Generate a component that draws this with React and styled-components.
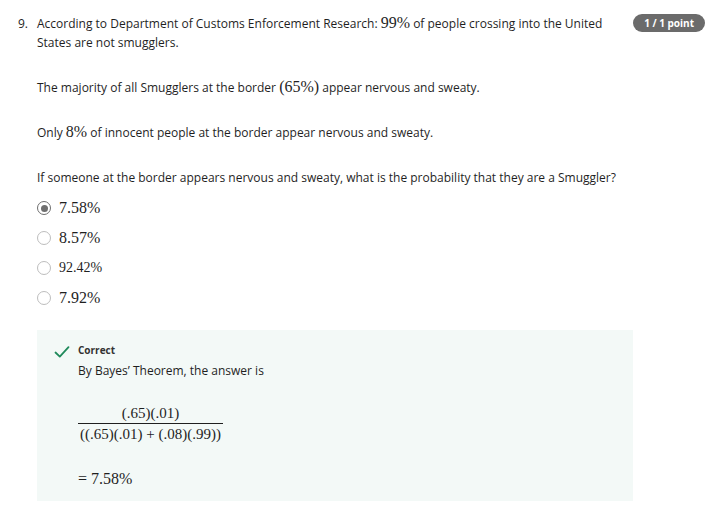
import React from 'react';
import styled, { createGlobalStyle } from 'styled-components';

const GlobalStyle = createGlobalStyle`
  html, body {
    margin: 0;
    padding: 0;
    background: #ffffff;
  }
  body {
    font-family: "Open Sans", "Noto Sans", sans-serif;
    font-size: 12px;
    color: #1f1f1f;
  }
`;

const options = [
  { id: 'a', text: '7.58%', selected: true },
  { id: 'b', text: '8.57%' },
  { id: 'c', text: '92.42%', small: true },
  { id: 'd', text: '7.92%' },
];

const App = () => (
  <>
    <GlobalStyle />
    <Page>
      <Question>
        <Number>9.</Number>
        <Body>
          <Prompt>
            <p>
              According to Department of Customs Enforcement Research: <M>99%</M> of people crossing into the United
              States are not smugglers.
            </p>
            <p>
              The majority of all Smugglers at the border <M>(65%)</M> appear nervous and sweaty.
            </p>
            <p>
              Only <M>8%</M> of innocent people at the border appear nervous and sweaty.
            </p>
            <p>
              If someone at the border appears nervous and sweaty, what is the probability that they are a Smuggler?
            </p>
          </Prompt>

          <Options>
            {options.map((opt) => (
              <Option key={opt.id}>
                <Radio selected={opt.selected} />
                <OptionText small={opt.small}>{opt.text}</OptionText>
              </Option>
            ))}
          </Options>

          <Feedback>
            <CheckIcon width="16" height="16" viewBox="0 0 16 16">
              <path d="M1.5 8.5 L5.8 12.6 L14.5 3.2" fill="none" stroke="#1f8a5b" strokeWidth="1.8" strokeLinecap="round" strokeLinejoin="round" />
            </CheckIcon>
            <FeedbackBody>
              <FeedbackTitle>Correct</FeedbackTitle>
              <FeedbackText>By Bayes’ Theorem, the answer is</FeedbackText>
              <Fraction>
                <Numer>(.65)(.01)</Numer>
                <Denom>((.65)(.01) + (.08)(.99))</Denom>
              </Fraction>
              <Result>= 7.58%</Result>
            </FeedbackBody>
          </Feedback>
        </Body>
        <Badge>1 / 1 point</Badge>
      </Question>
    </Page>
  </>
);

export default App;

const Page = styled.div`
  padding: 14px 8px 8px 18px;
`;

const Question = styled.div`
  display: grid;
  grid-template-columns: 19px 596px 1fr;
  align-items: start;
`;

const Number = styled.div`
  line-height: 19px;
`;

const Body = styled.div`
  display: flex;
  flex-direction: column;
`;

const Prompt = styled.div`
  p {
    margin: 0 0 26px 0;
    line-height: 19px;
  }
  p:last-child {
    margin-bottom: 0;
  }
`;

const M = styled.span`
  font-family: "Liberation Serif", "DejaVu Serif", serif;
  font-size: 16px;
  line-height: 1;
`;

const Options = styled.div`
  display: flex;
  flex-direction: column;
  gap: 10px;
  margin-top: 11px;
`;

const Option = styled.label`
  display: flex;
  align-items: center;
  gap: 8px;
  height: 20px;
`;

const Radio = styled.span`
  box-sizing: border-box;
  width: 14px;
  height: 14px;
  border-radius: 50%;
  border: 1.5px solid ${(p) => (p.selected ? '#6e6e6e' : '#bdbdbd')};
  position: relative;
  flex-shrink: 0;

  &::after {
    content: '';
    display: ${(p) => (p.selected ? 'block' : 'none')};
    position: absolute;
    inset: 2.5px;
    border-radius: 50%;
    background: #6e6e6e;
  }
`;

const OptionText = styled.span`
  font-family: "Liberation Serif", "DejaVu Serif", serif;
  font-size: ${(p) => (p.small ? '14px' : '16px')};
  color: #1f1f1f;
`;

const Feedback = styled.div`
  display: flex;
  gap: 8px;
  background: #f3f9f7;
  margin-top: 22px;
  padding: 13px 16px 12px 17px;
`;

const CheckIcon = styled.svg`
  flex-shrink: 0;
  margin-top: 1px;
`;

const FeedbackBody = styled.div`
  display: flex;
  flex-direction: column;
`;

const FeedbackTitle = styled.div`
  font-size: 10px;
  font-weight: 700;
  color: #333;
  line-height: 14px;
`;

const FeedbackText = styled.div`
  margin-top: 4px;
  line-height: 19px;
`;

const Fraction = styled.div`
  display: inline-flex;
  flex-direction: column;
  align-items: center;
  align-self: flex-start;
  margin-top: 25px;
  font-family: "Liberation Serif", "DejaVu Serif", serif;
  font-size: 15px;
`;

const Numer = styled.div`
  padding: 0 2px 1px;
  line-height: 17px;
`;

const Denom = styled.div`
  border-top: 1px solid #1f1f1f;
  padding: 1px 2px 0;
  line-height: 18px;
`;

const Result = styled.div`
  margin-top: 26px;
  font-family: "Liberation Serif", "DejaVu Serif", serif;
  font-size: 16px;
  line-height: 20px;
`;

const Badge = styled.div`
  justify-self: end;
  background: #6b6b6b;
  color: #fff;
  font-size: 10px;
  font-weight: 700;
  border-radius: 9px;
  height: 18px;
  line-height: 18px;
  padding: 0 11px;
  white-space: nowrap;
`;
